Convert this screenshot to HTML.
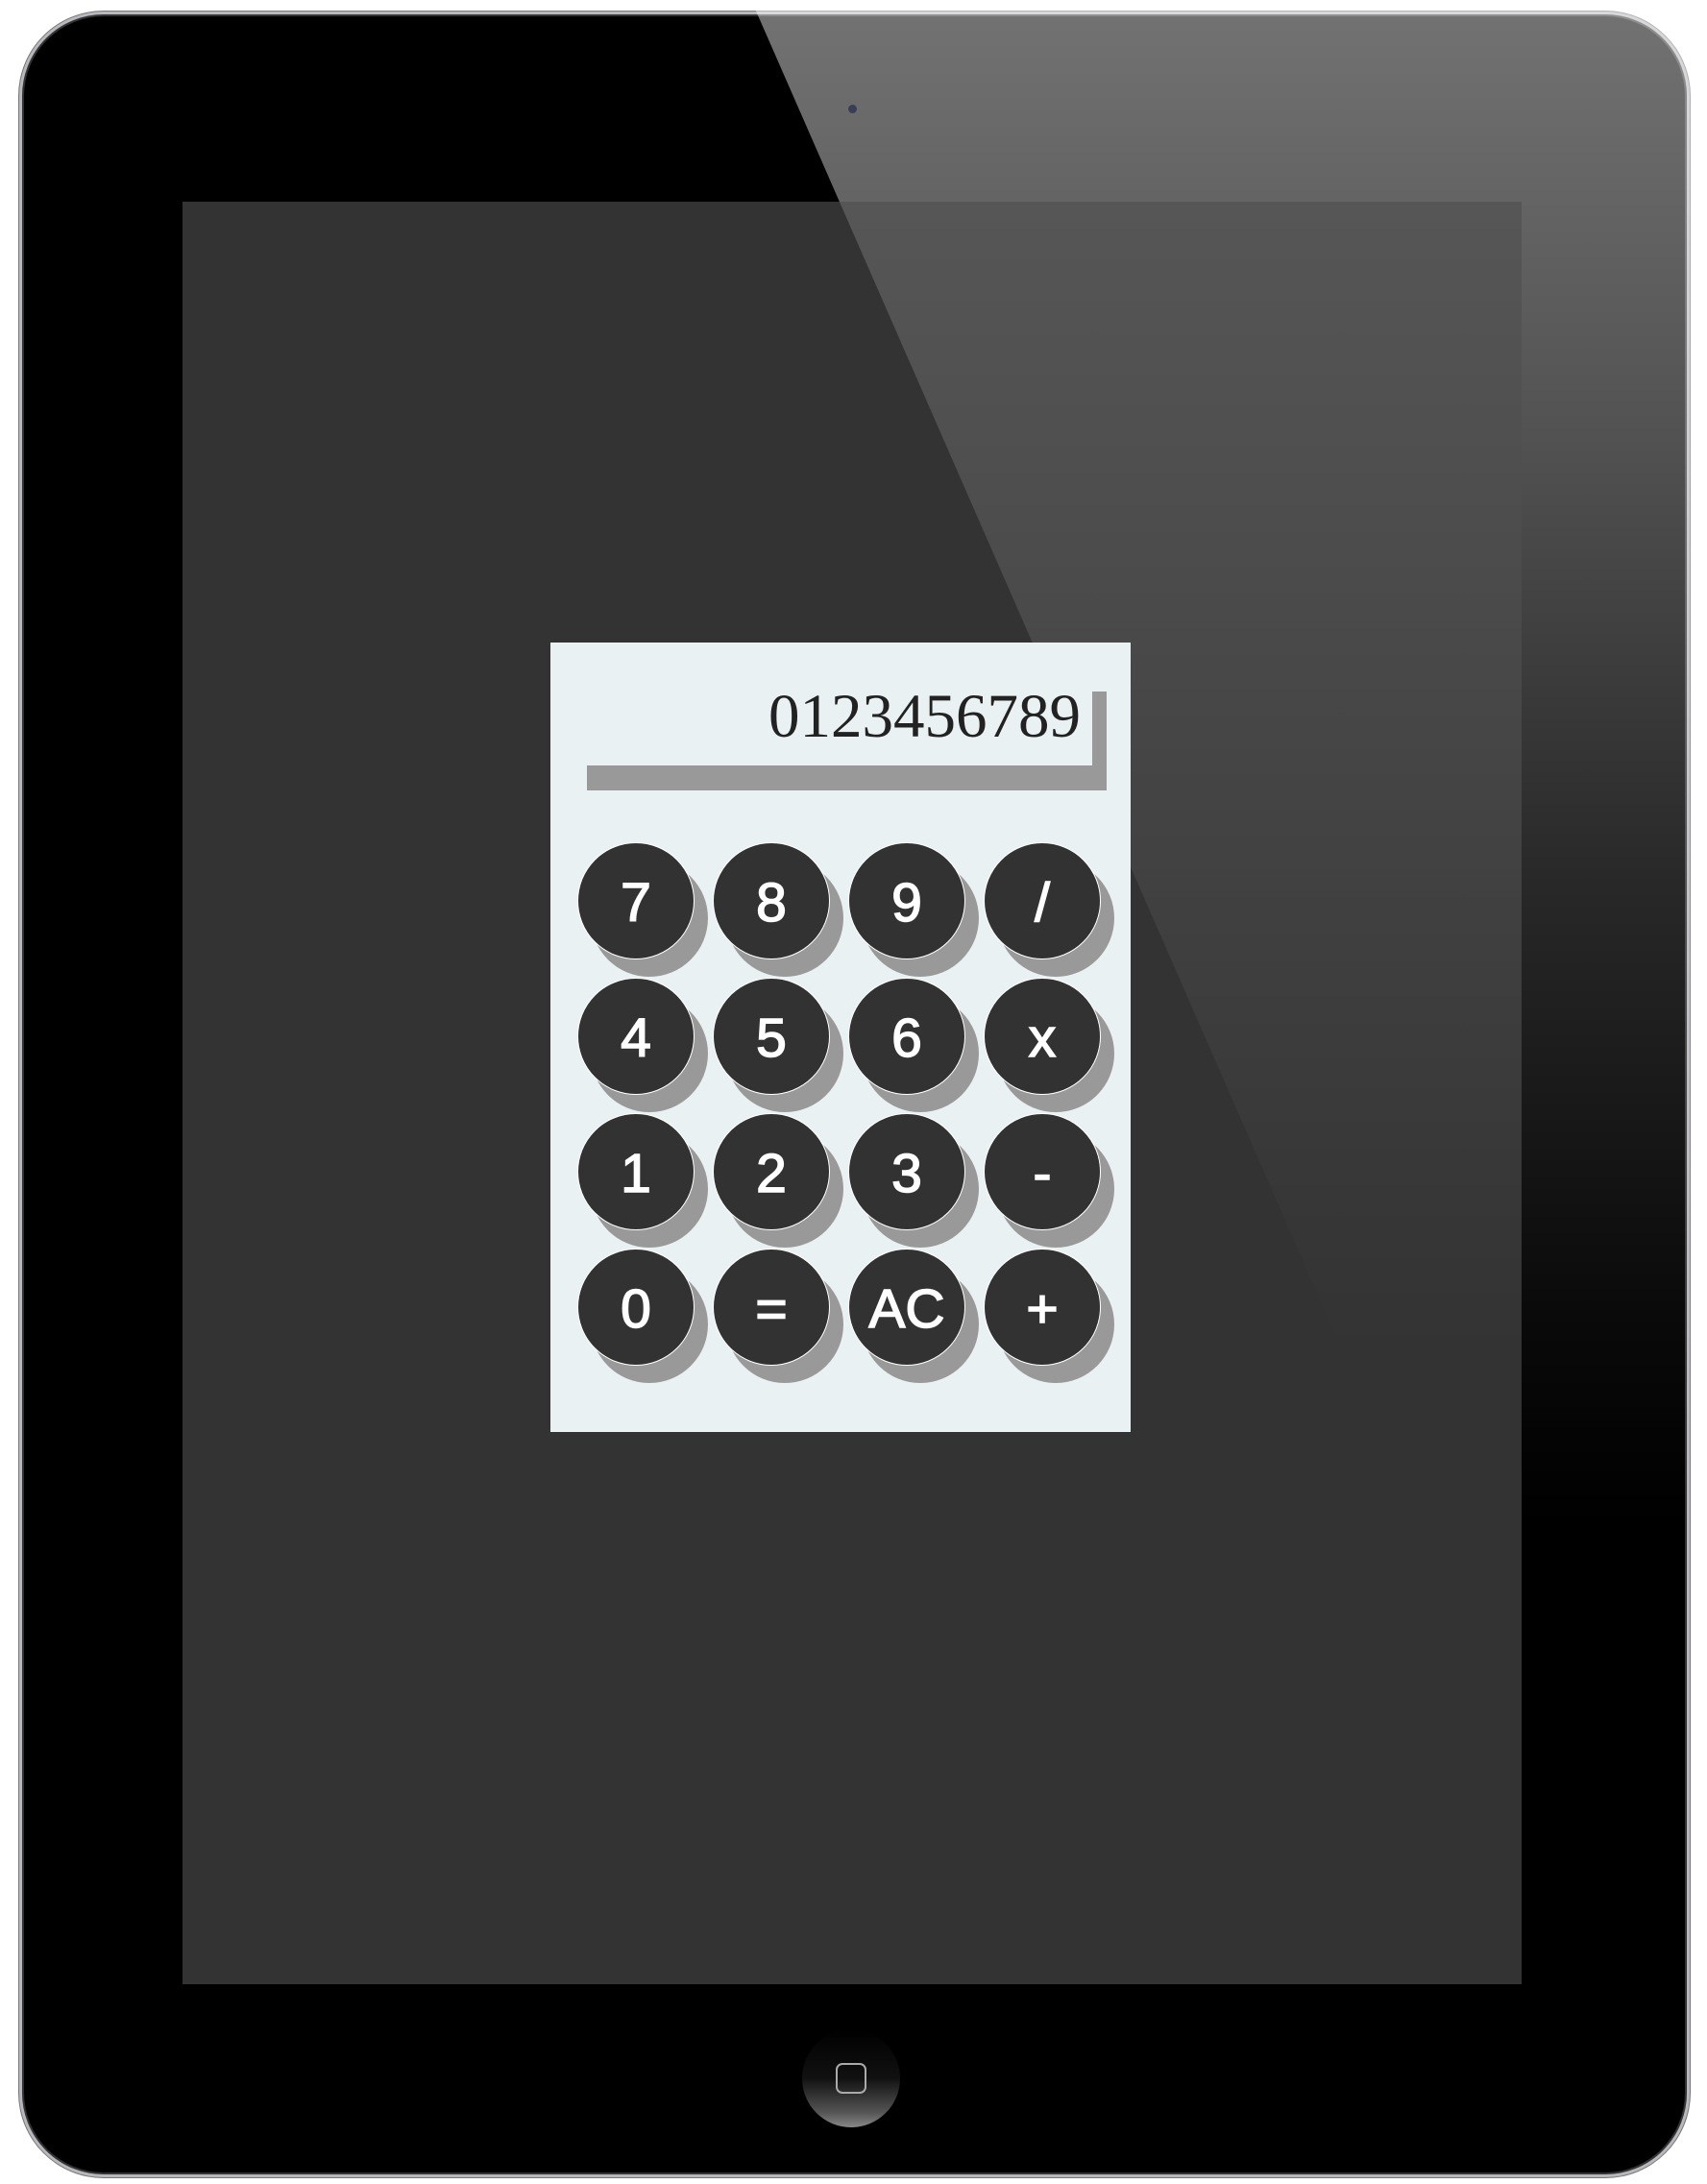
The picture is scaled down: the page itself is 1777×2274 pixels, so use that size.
<!DOCTYPE html>
<html><head><meta charset="utf-8"><style>
html,body{margin:0;padding:0;background:#fff;}
body{width:1777px;height:2274px;position:relative;overflow:hidden;font-family:"Liberation Sans",sans-serif;}
.dev{position:absolute;left:20px;top:12px;width:1733px;height:2249px;border-radius:88px;background:#000;border:3px solid #b8b8bc;box-shadow:0 0 0 1px #777, inset 0 0 0 2px #333;overflow:hidden;}
.glare1{position:absolute;left:0;top:0;width:1777px;height:2274px;clip-path:polygon(782px 0,1777px 0,1777px 2274px);background:linear-gradient(180deg,rgba(255,255,255,0.45) 0%,rgba(255,255,255,0.32) 20%,rgba(255,255,255,0.16) 40%,rgba(255,255,255,0.04) 60%,rgba(255,255,255,0) 70%);}
.screen{position:absolute;left:190px;top:210px;width:1394px;height:1856px;background:#333;overflow:hidden;}
.glare2{position:absolute;left:-190px;top:-210px;width:1777px;height:2274px;clip-path:polygon(782px 0,1777px 0,1777px 2274px);background:linear-gradient(180deg,rgba(255,255,255,0.2) 0%,rgba(255,255,255,0.14) 20%,rgba(255,255,255,0.07) 40%,rgba(255,255,255,0.02) 55%,rgba(255,255,255,0) 62%);}
.cam{position:absolute;left:883px;top:109px;width:9px;height:9px;border-radius:50%;background:#3a3d58;}
.home{position:absolute;left:835px;top:2113px;width:102px;height:102px;border-radius:50%;background:linear-gradient(180deg,#000 0%,#111 50%,#555 85%,#888 100%);}
.home i{position:absolute;left:35px;top:35px;width:28px;height:28px;border:2px solid #aaa;border-radius:7px;}
.calc{position:absolute;left:573px;top:669px;width:604px;height:822px;background:#e9f1f3;}
.disp{position:absolute;left:23px;top:25px;width:541px;height:103px;box-shadow:15px 26px 0 #999;background:#e9f1f3;}
.disp span{position:absolute;right:12px;top:20px;font-family:"Liberation Serif",serif;font-size:65px;color:#222;line-height:1;}
.b{position:absolute;width:120px;height:120px;border-radius:50%;background:#323232;border:1.5px solid #fff;box-shadow:14px 18px 0 #999;color:#fff;font-size:57px;-webkit-text-stroke:1.5px #fff;text-align:center;line-height:124px;}
</style></head><body>
<div class="dev"></div>
<div class="glare1"></div>
<div class="cam"></div>
<div class="screen"><div class="glare2"></div></div>
<div class="home"><i></i></div>
<div class="calc">
<div class="disp"><span>0123456789</span></div>
<div class="b" style="left:28px;top:208px">7</div>
<div class="b" style="left:169px;top:208px">8</div>
<div class="b" style="left:310px;top:208px">9</div>
<div class="b" style="left:451px;top:208px">/</div>
<div class="b" style="left:28px;top:349px">4</div>
<div class="b" style="left:169px;top:349px">5</div>
<div class="b" style="left:310px;top:349px">6</div>
<div class="b" style="left:451px;top:349px">x</div>
<div class="b" style="left:28px;top:490px">1</div>
<div class="b" style="left:169px;top:490px">2</div>
<div class="b" style="left:310px;top:490px">3</div>
<div class="b" style="left:451px;top:490px">-</div>
<div class="b" style="left:28px;top:631px">0</div>
<div class="b" style="left:169px;top:631px">=</div>
<div class="b" style="left:310px;top:631px">AC</div>
<div class="b" style="left:451px;top:631px">+</div>
</div>
</body></html>
